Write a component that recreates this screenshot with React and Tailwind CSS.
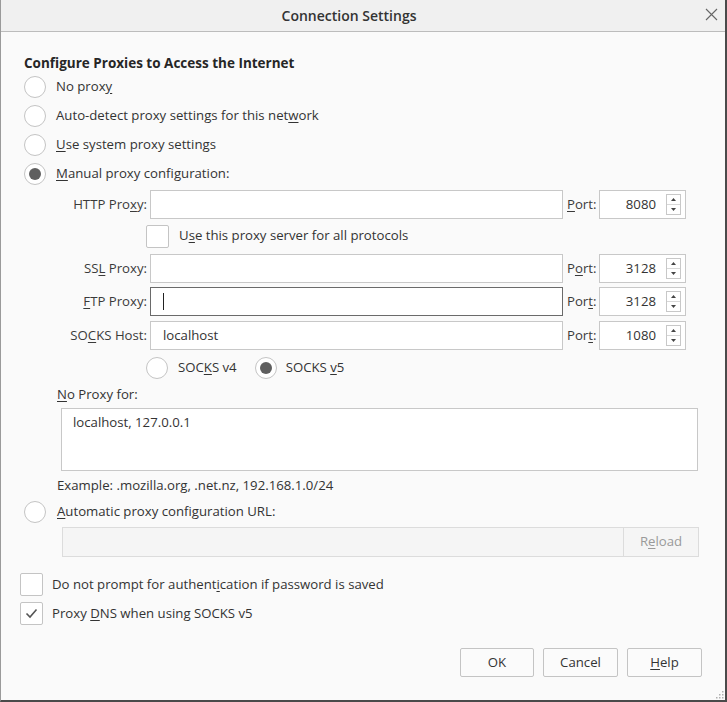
import React from "react";

const font = { fontFamily: '"Open Sans", "Noto Sans", sans-serif' };

function U({ children }) {
  return <span className="underline underline-offset-2 decoration-1">{children}</span>;
}

function Radio({ checked }) {
  return (
    <span className="w-[22px] h-[22px] rounded-full border border-[#c4c4c4] bg-white flex items-center justify-center shrink-0">
      {checked && <span className="w-[12px] h-[12px] rounded-full bg-[#5f5f5f]" />}
    </span>
  );
}

function Check({ checked }) {
  return (
    <span className="w-[23px] h-[23px] rounded-[2px] border border-[#c4c4c4] bg-white flex items-center justify-center shrink-0">
      {checked && (
        <svg width="13" height="11" viewBox="0 0 13 11">
          <path d="M1.5 5.5 L5 9 L11.5 1.5" fill="none" stroke="#555" strokeWidth="1.6" />
        </svg>
      )}
    </span>
  );
}

function Spinner() {
  return (
    <span className="w-[15px] h-[21px] border border-[#c8c8c8] bg-white flex flex-col shrink-0 mr-[4px]">
      <span className="flex-1 flex items-center justify-center border-b border-[#d8d8d8]">
        <svg width="5" height="3" viewBox="0 0 5 3"><path d="M0 3 L2.5 0 L5 3 Z" fill="#444" /></svg>
      </span>
      <span className="flex-1 flex items-center justify-center">
        <svg width="5" height="3" viewBox="0 0 5 3"><path d="M0 0 L2.5 3 L5 0 Z" fill="#444" /></svg>
      </span>
    </span>
  );
}

function ProxyRow({ label, value, focused, portLabel, port, className }) {
  return (
    <div className={"flex items-center h-[29px] pl-[3px] " + (className || "")}>
      <div className="w-[90px] text-right pr-[3px] text-[13.2px] text-[#3a3a3a]">{label}</div>
      <div
        className={
          "w-[413px] h-[29px] bg-white border flex items-center px-[12px] text-[13.2px] text-[#333] " +
          (focused ? "border-[#6a6a6a]" : "border-[#c8c8c8]")
        }
      >
        {focused && <span className="w-px h-[17px] bg-[#222]" />}
        {value}
      </div>
      <div className="w-[36px] pl-[4px] text-[13.2px] text-[#3a3a3a]">{portLabel}</div>
      <div className="w-[87px] h-[29px] bg-white border border-[#c8c8c8] flex items-center justify-end text-[13.2px] text-[#333]">
        <span className="mr-[10px]">{port}</span>
        <Spinner />
      </div>
    </div>
  );
}

export default function App() {
  return (
    <div
      className="w-[727px] h-[702px] bg-[#fafafa] border-l border-l-[#9a9a9a] border-r-2 border-r-[#4a4a4a] border-b-2 border-b-[#4a4a4a] flex flex-col text-[#333] relative text-[13.2px]"
      style={font}
    >
      <div className="h-[32px] bg-[#f0f0f0] border-b border-[#bcbcbc] flex items-center justify-center relative shrink-0 pr-[28px]">
        <span className="text-[14px] font-semibold text-[#333]">Connection Settings</span>
        <span className="absolute right-[7px] top-[8px]">
          <svg width="13" height="13" viewBox="0 0 13 13">
            <path d="M1 1 L12 12 M12 1 L1 12" stroke="#666" strokeWidth="1.1" />
          </svg>
        </span>
      </div>

      <div className="flex flex-col pl-[23px]">
        <div className="mt-[22px] h-[18px] flex items-center text-[13.5px] font-bold text-[#262626]">
          Configure Proxies to Access the Internet
        </div>
        <div className="h-[29px] flex items-center gap-[10px]">
          <Radio /> <span>No prox<U>y</U></span>
        </div>
        <div className="h-[29px] flex items-center gap-[10px]">
          <Radio /> <span>Auto-detect proxy settings for this net<U>w</U>ork</span>
        </div>
        <div className="h-[29px] flex items-center gap-[10px]">
          <Radio /> <span><U>U</U>se system proxy settings</span>
        </div>
        <div className="h-[29px] flex items-center gap-[10px]">
          <Radio checked /> <span><U>M</U>anual proxy configuration:</span>
        </div>

        <div className="ml-[33px] flex flex-col">
          <ProxyRow className="mt-[2px]" label={<>HTTP Pro<U>x</U>y:</>} portLabel={<><U>P</U>ort:</>} port="8080" />
          <div className="mt-[6px] h-[22px] flex items-center gap-[10px] pl-[89px]">
            <Check /> <span>U<U>s</U>e this proxy server for all protocols</span>
          </div>
          <ProxyRow className="mt-[7px]" label={<>SS<U>L</U> Proxy:</>} portLabel={<>P<U>o</U>rt:</>} port="3128" />
          <ProxyRow className="mt-[4px]" focused label={<><U>F</U>TP Proxy:</>} portLabel={<>Por<U>t</U>:</>} port="3128" />
          <ProxyRow className="mt-[5px]" label={<>SO<U>C</U>KS Host:</>} value="localhost" portLabel={<>Por<U>t</U>:</>} port="1080" />
          <div className="mt-[7px] h-[22px] flex items-center pl-[89px]">
            <Radio /> <span className="ml-[10px]">SOC<U>K</U>S v4</span>
            <span className="ml-[18px]"><Radio checked /></span>
            <span className="ml-[9px]">SOCKS <U>v</U>5</span>
          </div>
          <div className="mt-[7px] h-[18px] flex items-center">
            <U>N</U>o Proxy for:
          </div>
          <div className="mt-[4px] ml-[4px] w-[637px] h-[63px] bg-white border border-[#c8c8c8] px-[11px] py-[4px] text-[#333]">
            localhost, 127.0.0.1
          </div>
          <div className="mt-[6px] h-[18px] flex items-center">
            Example: .mozilla.org, .net.nz, 192.168.1.0/24
          </div>
        </div>

        <div className="mt-[6px] h-[22px] flex items-center gap-[11px]">
          <Radio /> <span><U>A</U>utomatic proxy configuration URL:</span>
        </div>
        <div className="mt-[4px] ml-[38px] w-[637px] h-[30px] flex border border-[#dcdcdc] bg-[#f5f5f5]">
          <div className="flex-1 border-r border-[#dcdcdc]" />
          <div className="w-[74px] flex items-center justify-center text-[#9a9a9a]">
            R<U>e</U>load
          </div>
        </div>

        <div className="mt-[16px] -ml-[4px] h-[23px] flex items-center gap-[9px]">
          <Check /> <span>Do not prompt for authent<U>i</U>cation if password is saved</span>
        </div>
        <div className="mt-[6px] -ml-[4px] h-[23px] flex items-center gap-[9px]">
          <Check checked /> <span>Proxy <U>D</U>NS when using SOCKS v5</span>
        </div>

        <div className="mt-[23px] flex justify-end gap-[9px] pr-[23px]">
          <button className="w-[74px] h-[29px] border border-[#c4c4c4] bg-[#fbfbfb] text-[#333] rounded-[2px]">OK</button>
          <button className="w-[75px] h-[29px] border border-[#c4c4c4] bg-[#fbfbfb] text-[#333] rounded-[2px]">Cancel</button>
          <button className="w-[75px] h-[29px] border border-[#c4c4c4] bg-[#fbfbfb] text-[#333] rounded-[2px]"><U>H</U>elp</button>
        </div>
      </div>

      <svg className="absolute right-[1px] bottom-[1px]" width="8" height="8" viewBox="0 0 8 8">
        <g fill="#b0b0b0">
          <rect x="6" y="0" width="1.5" height="1.5" />
          <rect x="3" y="3" width="1.5" height="1.5" />
          <rect x="6" y="3" width="1.5" height="1.5" />
          <rect x="0" y="6" width="1.5" height="1.5" />
          <rect x="3" y="6" width="1.5" height="1.5" />
          <rect x="6" y="6" width="1.5" height="1.5" />
        </g>
      </svg>
    </div>
  );
}
